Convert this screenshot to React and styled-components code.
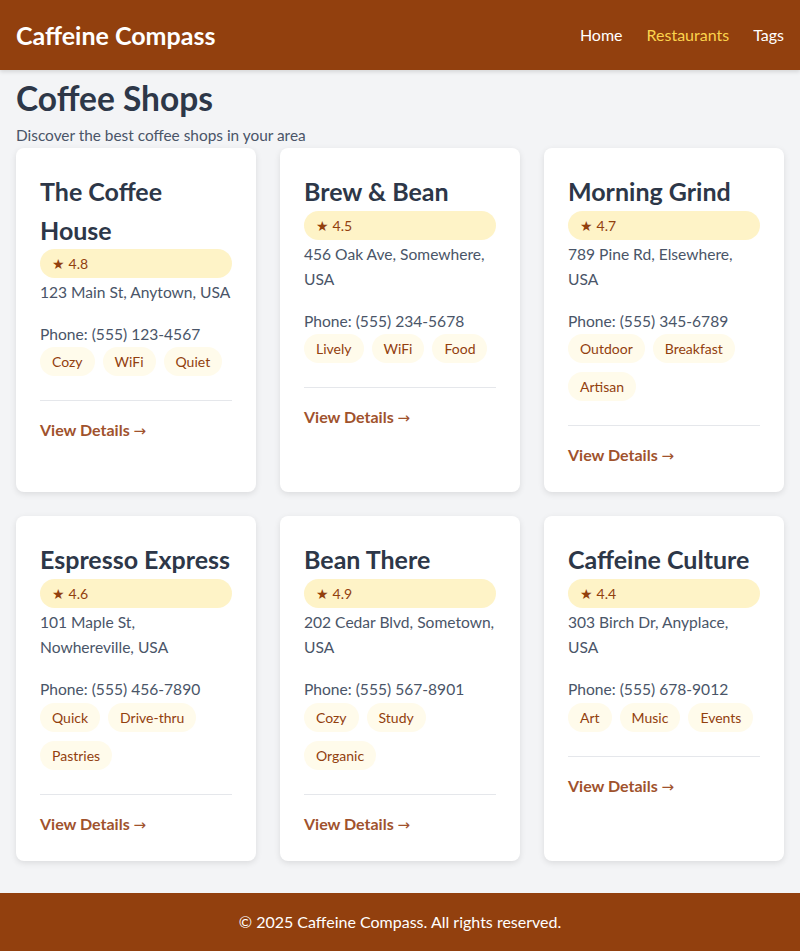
import React from "react";
import styled, { createGlobalStyle } from "styled-components";

const Global = createGlobalStyle`
  * { box-sizing: border-box; }
  html, body { margin: 0; padding: 0; }
  body {
    font-family: "Segoe UI", Lato, "Noto Sans", sans-serif;
    background: #f3f4f6;
    color: #4a5568;
    line-height: 1.6;
  }
`;

const Header = styled.header`
  height: 70px;
  background: #92400e;
  display: flex;
  align-items: center;
  justify-content: space-between;
  padding: 0 16px;
  box-shadow: 0 2px 4px rgba(0, 0, 0, 0.12);
`;

const Brand = styled.div`
  color: #fff;
  font-size: 25px;
  font-weight: 700;
`;

const Nav = styled.nav`
  display: flex;
  gap: 24px;
`;

const NavLink = styled.a`
  color: ${(p) => (p.$active ? "#fcd34d" : "#fff")};
  font-size: 16px;
  text-decoration: none;
`;

const Main = styled.main`
  padding: 8px 16px 0;
`;

const Title = styled.h1`
  margin: 0;
  font-size: 33.5px;
  line-height: 40px;
  font-weight: 700;
  color: #2d3748;
`;

const Subtitle = styled.p`
  margin: 4px 0 0;
  font-size: 15.4px;
  line-height: 26px;
  color: #4a5568;
`;

const Grid = styled.div`
  display: grid;
  grid-template-columns: repeat(3, 1fr);
  gap: 24px;
`;

const Card = styled.article`
  background: #fff;
  border-radius: 8px;
  padding: 24px;
  box-shadow: 0 2px 6px rgba(0, 0, 0, 0.1);
  display: flex;
  flex-direction: column;
  align-items: stretch;
`;

const CardTitle = styled.h2`
  margin: 0;
  font-size: 25px;
  line-height: 38.5px;
  font-weight: 700;
  color: #2d3748;
`;

const Rating = styled.div`
  background: #fef3c7;
  color: #92400e;
  border-radius: 999px;
  padding: 4px 12px;
  font-size: 14px;
  line-height: 21px;
  margin-bottom: 2px;
`;

const Info = styled.p`
  margin: 0 0 ${(p) => p.$mb || 0}px;
  font-size: 15.6px;
  line-height: 25.6px;
  color: #4a5568;
`;

const Tags = styled.div`
  display: flex;
  flex-wrap: wrap;
  gap: 9px 8px;
`;

const Tag = styled.span`
  background: #fffbeb;
  color: #92400e;
  border-radius: 999px;
  padding: 4px 12px;
  font-size: 14px;
  line-height: 21px;
`;

const CardFooter = styled.div`
  margin-top: 24px;
  border-top: 1px solid #e5e7eb;
  padding-top: 16px;
  font-size: 16px;
  line-height: 26px;
`;

const DetailsLink = styled.a`
  display: block;
  color: #a0522d;
  font-weight: 700;
  font-size: 16px;
  line-height: 26px;
  height: 26px;
  text-decoration: none;
`;

const Arrow = styled.span`
  font-family: "DejaVu Sans", sans-serif;
  font-weight: 400;
  font-size: 15px;
  line-height: 1;
`;

const Footer = styled.footer`
  margin-top: 32px;
  background: #92400e;
  color: #fff;
  text-align: center;
  padding: 16px;
  font-size: 16px;
  line-height: 26px;
`;

const shops = [
  { name: "The Coffee House", rating: "4.8", address: "123 Main St, Anytown, USA", phone: "(555) 123-4567", tags: ["Cozy", "WiFi", "Quiet"] },
  { name: "Brew & Bean", rating: "4.5", address: "456 Oak Ave, Somewhere, USA", phone: "(555) 234-5678", tags: ["Lively", "WiFi", "Food"] },
  { name: "Morning Grind", rating: "4.7", address: "789 Pine Rd, Elsewhere, USA", phone: "(555) 345-6789", tags: ["Outdoor", "Breakfast", "Artisan"] },
  { name: "Espresso Express", rating: "4.6", address: "101 Maple St, Nowhereville, USA", phone: "(555) 456-7890", tags: ["Quick", "Drive-thru", "Pastries"] },
  { name: "Bean There", rating: "4.9", address: "202 Cedar Blvd, Sometown, USA", phone: "(555) 567-8901", tags: ["Cozy", "Study", "Organic"] },
  { name: "Caffeine Culture", rating: "4.4", address: "303 Birch Dr, Anyplace, USA", phone: "(555) 678-9012", tags: ["Art", "Music", "Events"] },
];

export default function App() {
  return (
    <>
      <Global />
      <Header>
        <Brand>Caffeine Compass</Brand>
        <Nav>
          <NavLink href="#">Home</NavLink>
          <NavLink href="#" $active>Restaurants</NavLink>
          <NavLink href="#">Tags</NavLink>
        </Nav>
      </Header>
      <Main>
        <Title>Coffee Shops</Title>
        <Subtitle>Discover the best coffee shops in your area</Subtitle>
        <Grid>
          {shops.map((s) => (
            <Card key={s.name}>
              <CardTitle>{s.name}</CardTitle>
              <Rating>★ {s.rating}</Rating>
              <Info $mb={16}>{s.address}</Info>
              <Info>Phone: {s.phone}</Info>
              <Tags>
                {s.tags.map((t) => (
                  <Tag key={t}>{t}</Tag>
                ))}
              </Tags>
              <CardFooter>
                <DetailsLink href="#">
                  View Details <Arrow>→</Arrow>
                </DetailsLink>
              </CardFooter>
            </Card>
          ))}
        </Grid>
      </Main>
      <Footer>© 2025 Caffeine Compass. All rights reserved.</Footer>
    </>
  );
}
